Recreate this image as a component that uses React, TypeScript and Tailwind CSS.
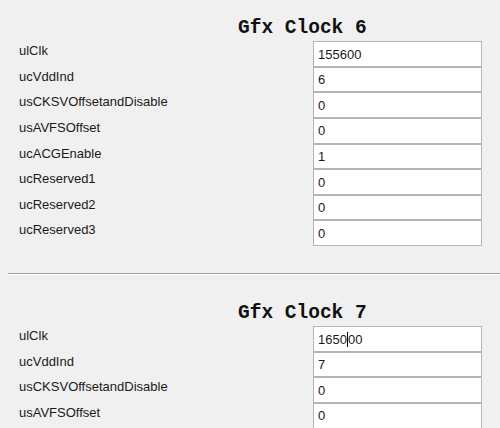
const sections = [
  {
    title: "Gfx Clock 6",
    rows: [
      ["ulClk", "155600"],
      ["ucVddInd", "6"],
      ["usCKSVOffsetandDisable", "0"],
      ["usAVFSOffset", "0"],
      ["ucACGEnable", "1"],
      ["ucReserved1", "0"],
      ["ucReserved2", "0"],
      ["ucReserved3", "0"],
    ],
  },
  {
    title: "Gfx Clock 7",
    rows: [
      ["ulClk", "165000"],
      ["ucVddInd", "7"],
      ["usCKSVOffsetandDisable", "0"],
      ["usAVFSOffset", "0"],
      ["ucACGEnable", "1"],
      ["ucReserved1", "0"],
      ["ucReserved2", "0"],
      ["ucReserved3", "0"],
    ],
  },
];

function Field({ value, caret }: { value: string; caret?: boolean }) {
  return (
    <div className="h-full w-[169px] bg-white border border-[#b5b5b5] pl-[4px] pt-[1px] flex items-center text-[#1a1a1a]">
      {caret ? (
        <>
          {value.slice(0, 4)}
          <span className="inline-block w-px h-[15px] bg-black" />
          {value.slice(4)}
        </>
      ) : (
        value
      )}
    </div>
  );
}

export default function App() {
  return (
    <div className="w-[500px] h-[428px] overflow-hidden bg-[#f0f0f0] text-[13px] font-['Liberation_Sans',Arial,sans-serif]">
      {sections.map((s, si) => (
        <div key={s.title} className="h-[285px] flex flex-col">
          <div className="h-[41px] pt-[17px] pl-[238px] font-['Liberation_Mono','Courier_New',monospace] font-bold text-[19.5px] leading-[22px] text-[#111]">
            {s.title}
          </div>
          <div className="flex flex-col">
            {s.rows.map(([label, value], i) => (
              <div key={label} className="flex h-[25.625px]">
                <div className="w-[313px] pl-[19px] pt-[3px] leading-[13px] text-[#1a1a1a]">
                  {label}
                </div>
                <Field value={value} caret={si === 1 && i === 0} />
              </div>
            ))}
          </div>
          <div className="mt-[27px] ml-[8px] h-[2px] border-t border-[#a0a0a0] border-b border-b-white" />
        </div>
      ))}
    </div>
  );
}
